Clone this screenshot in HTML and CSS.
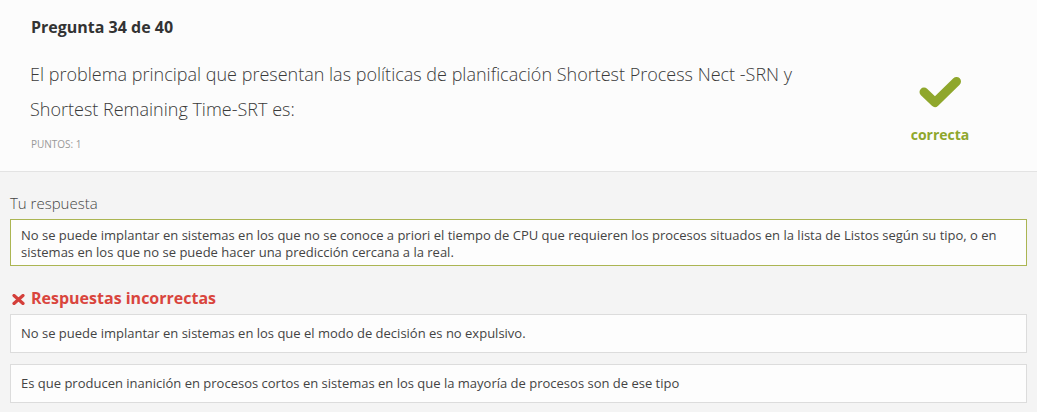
FILE: index.html
```html
<!DOCTYPE html>
<html lang="es">
<head>
<meta charset="utf-8">
<title>Pregunta 34 de 40</title>
<link rel="stylesheet" href="styles.css">
</head>
<body>
<section class="question">
  <div class="q-main">
    <h2 class="q-number">Pregunta 34 de 40</h2>
    <p class="q-text">El problema principal que presentan las políticas de planificación Shortest Process Nect -SRN y Shortest Remaining Time-SRT es:</p>
    <div class="q-points">Puntos: 1</div>
  </div>
  <div class="q-status">
    <svg class="check" width="44" height="32" viewBox="0 0 44 32" aria-hidden="true">
      <polyline points="6,16 17,26.5 38.5,5.5" fill="none" stroke="#8fa72c" stroke-width="9" stroke-linecap="round" stroke-linejoin="round"/>
    </svg>
    <span class="status-label">correcta</span>
  </div>
</section>
<section class="answers">
  <div class="label">Tu respuesta</div>
  <div class="box box-selected">No se puede implantar en sistemas en los que no se conoce a priori el tiempo de CPU que requieren los procesos situados en la lista de Listos según su tipo, o en sistemas en los que no se puede hacer una predicción cercana a la real.</div>
  <h3 class="wrong-title">
    <svg class="xmark" width="13" height="11" viewBox="0 0 13 11" aria-hidden="true">
      <path d="M2 1.5 L11 9.5 M11 1.5 L2 9.5" stroke="#d43f3a" stroke-width="3.2" stroke-linecap="round"/>
    </svg>
    Respuestas incorrectas
  </h3>
  <div class="box">No se puede implantar en sistemas en los que el modo de decisión es no expulsivo.</div>
  <div class="box">Es que producen inanición en procesos cortos en sistemas en los que la mayoría de procesos son de ese tipo</div>
</section>
</body>
</html>
```

FILE: styles.css
```css
* { box-sizing: border-box; }
html, body { margin: 0; padding: 0; }
body {
  background: #f4f4f4;
  font-family: "Open Sans", "Noto Sans", sans-serif;
  color: #444;
}
.question {
  display: flex;
  background: #fcfcfc;
  border-bottom: 1px solid #e3e3e3;
  height: 172px;
}
.q-main {
  flex: 1;
  padding: 15px 0 0 31px;
}
.q-number {
  margin: 0;
  font-size: 16px;
  line-height: 24px;
  font-weight: 700;
  color: #333;
}
.q-text {
  margin: 18px 0 0 -1px;
  font-size: 18px;
  line-height: 35px;
  font-weight: 300;
  color: #3a3a3a;
}
.q-points {
  margin-top: 10px;
  font-size: 10px;
  line-height: 14px;
  text-transform: uppercase;
  color: #999;
}
.q-status {
  width: 194px;
  display: flex;
  flex-direction: column;
  align-items: center;
  padding-top: 76px;
}
.check { display: block; }
.status-label {
  margin-top: 17px;
  font-size: 14px;
  line-height: 20px;
  font-weight: 700;
  color: #8fa72c;
}
.answers {
  padding: 20px 10px 0 10px;
}
.label {
  font-size: 15px;
  line-height: 22px;
  font-weight: 300;
  color: #444;
}
.box {
  background: #fdfdfd;
  border: 1px solid #dcdcdc;
  font-size: 13px;
  line-height: 17px;
  color: #444;
  padding: 10px 10px;
  margin-bottom: 11px;
}
.box-selected {
  border-color: #abb552;
  padding: 7px 10px 4px;
  margin-top: 5px;
  margin-bottom: 0;
}
.wrong-title {
  display: flex;
  align-items: center;
  gap: 6px;
  margin: 21px 0 5px 2px;
  font-size: 16px;
  line-height: 22px;
  font-weight: 700;
  color: #d9453d;
}
.xmark { display: block; margin-top: 2px; }
```
